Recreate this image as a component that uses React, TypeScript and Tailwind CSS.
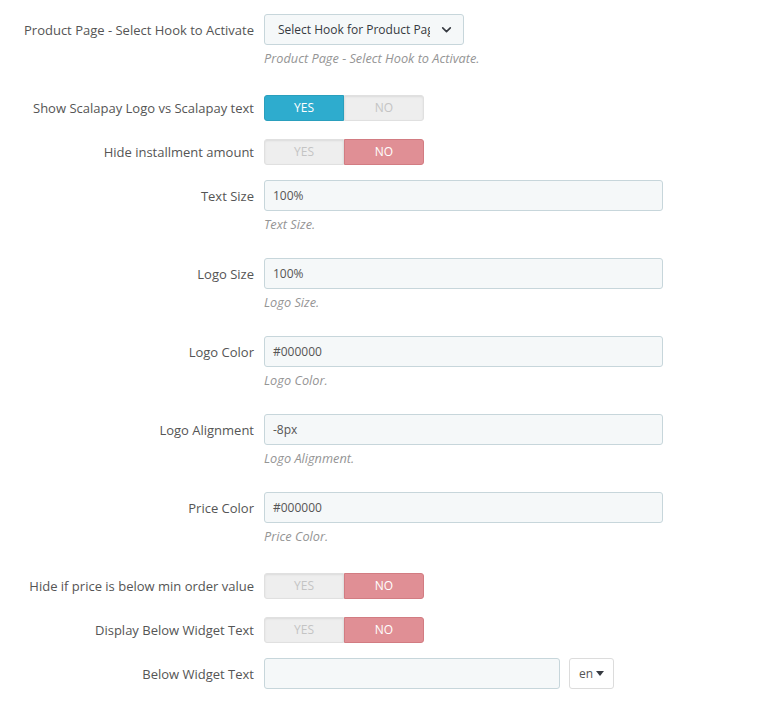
import React from 'react';

const font = { fontFamily: '"Open Sans", "Noto Sans", sans-serif' };

const Label: React.FC<{ children: React.ReactNode }> = ({ children }) => (
  <div className="w-[254px] shrink-0 pt-[1px] text-right text-[13px] leading-[31px] text-[#555] mr-[10px] whitespace-nowrap">
    {children}
  </div>
);

const Help: React.FC<{ children: React.ReactNode }> = ({ children }) => (
  <div className="mt-[4px] text-[12.75px] leading-[18px] italic text-[#959595] whitespace-nowrap">{children}</div>
);

const Switch: React.FC<{ yes: boolean }> = ({ yes }) => (
  <div className="flex h-[26px] w-[160px] text-[12px]">
    <div
      className={`flex w-[80px] items-center justify-center rounded-l-[3px] border ${
        yes
          ? 'border-[#2a9fbd] bg-[#2eacce] text-white'
          : 'border-[#e0e0e0] bg-[#eeeeee] text-[#c4c4c4] shadow-[inset_0_1px_2px_rgba(0,0,0,0.08)]'
      }`}
    >
      YES
    </div>
    <div
      className={`flex w-[80px] items-center justify-center rounded-r-[3px] border ${
        !yes
          ? 'border-[#d27c82] bg-[#e08f95] text-white'
          : 'border-[#e0e0e0] bg-[#eeeeee] text-[#c4c4c4] shadow-[inset_0_1px_2px_rgba(0,0,0,0.08)]'
      }`}
    >
      NO
    </div>
  </div>
);

const TextInput: React.FC<{ value: string; width?: string }> = ({ value, width = 'w-[399px]' }) => (
  <div
    className={`${width} h-[31px] rounded-[3px] border border-[#c7d6db] bg-[#f5f8f9] px-[8px] text-[12px] leading-[29px] text-[#555]`}
  >
    {value}
  </div>
);

const InputRow: React.FC<{ label: string; value: string; help: string; className?: string }> = ({ label, value, help, className }) => (
  <div className={`flex ${className ?? ''}`}>
    <Label>{label}</Label>
    <div>
      <TextInput value={value} />
      <Help>{help}</Help>
    </div>
  </div>
);

const SwitchRow: React.FC<{ label: string; yes: boolean; className?: string }> = ({ label, yes, className }) => (
  <div className={`flex items-center ${className ?? ''}`}>
    <div className="w-[254px] shrink-0 mr-[10px] pt-[2px] text-right text-[13px] text-[#555] whitespace-nowrap">{label}</div>
    <Switch yes={yes} />
  </div>
);

export default function App() {
  return (
    <div className="min-h-screen bg-white pt-[14px]" style={font}>
      <div className="flex">
        <Label>Product Page - Select Hook to Activate</Label>
        <div>
          <div className="flex h-[31px] w-[200px] items-center rounded-[3px] border border-[#c7d6db] bg-[#f5f8f9] pl-[13px] pr-[10px] text-[12px] text-[#363a41]">
            <span className="flex-1 overflow-hidden whitespace-nowrap">Select Hook for Product Page</span>
            <svg width="13" height="13" viewBox="0 0 24 24" className="ml-[10px] shrink-0" fill="none" stroke="#363a41" strokeWidth="3" strokeLinecap="round" strokeLinejoin="round">
              <path d="M5 9l7 7 7-7" />
            </svg>
          </div>
          <Help>Product Page - Select Hook to Activate.</Help>
        </div>
      </div>

      <SwitchRow className="mt-[28px]" label="Show Scalapay Logo vs Scalapay text" yes={true} />
      <SwitchRow className="mt-[18px]" label="Hide installment amount" yes={false} />

      <InputRow className="mt-[15px]" label="Text Size" value="100%" help="Text Size." />
      <InputRow className="mt-[25px]" label="Logo Size" value="100%" help="Logo Size." />
      <InputRow className="mt-[25px]" label="Logo Color" value="#000000" help="Logo Color." />
      <InputRow className="mt-[25px]" label="Logo Alignment" value="-8px" help="Logo Alignment." />
      <InputRow className="mt-[25px]" label="Price Color" value="#000000" help="Price Color." />

      <SwitchRow className="mt-[28px]" label="Hide if price is below min order value" yes={false} />
      <SwitchRow className="mt-[18px]" label="Display Below Widget Text" yes={false} />

      <div className="mt-[15px] flex">
        <Label>Below Widget Text</Label>
        <TextInput value="" width="w-[296px]" />
        <div className="ml-[9px] flex h-[31px] w-[45px] items-center justify-center gap-[3px] rounded-[3px] border border-[#dcdcdc] bg-white text-[12px] text-[#555]">
          en
          <svg width="8" height="6" viewBox="0 0 8 6">
            <path d="M0 0h8L4 5z" fill="#363a41" />
          </svg>
        </div>
      </div>
    </div>
  );
}
